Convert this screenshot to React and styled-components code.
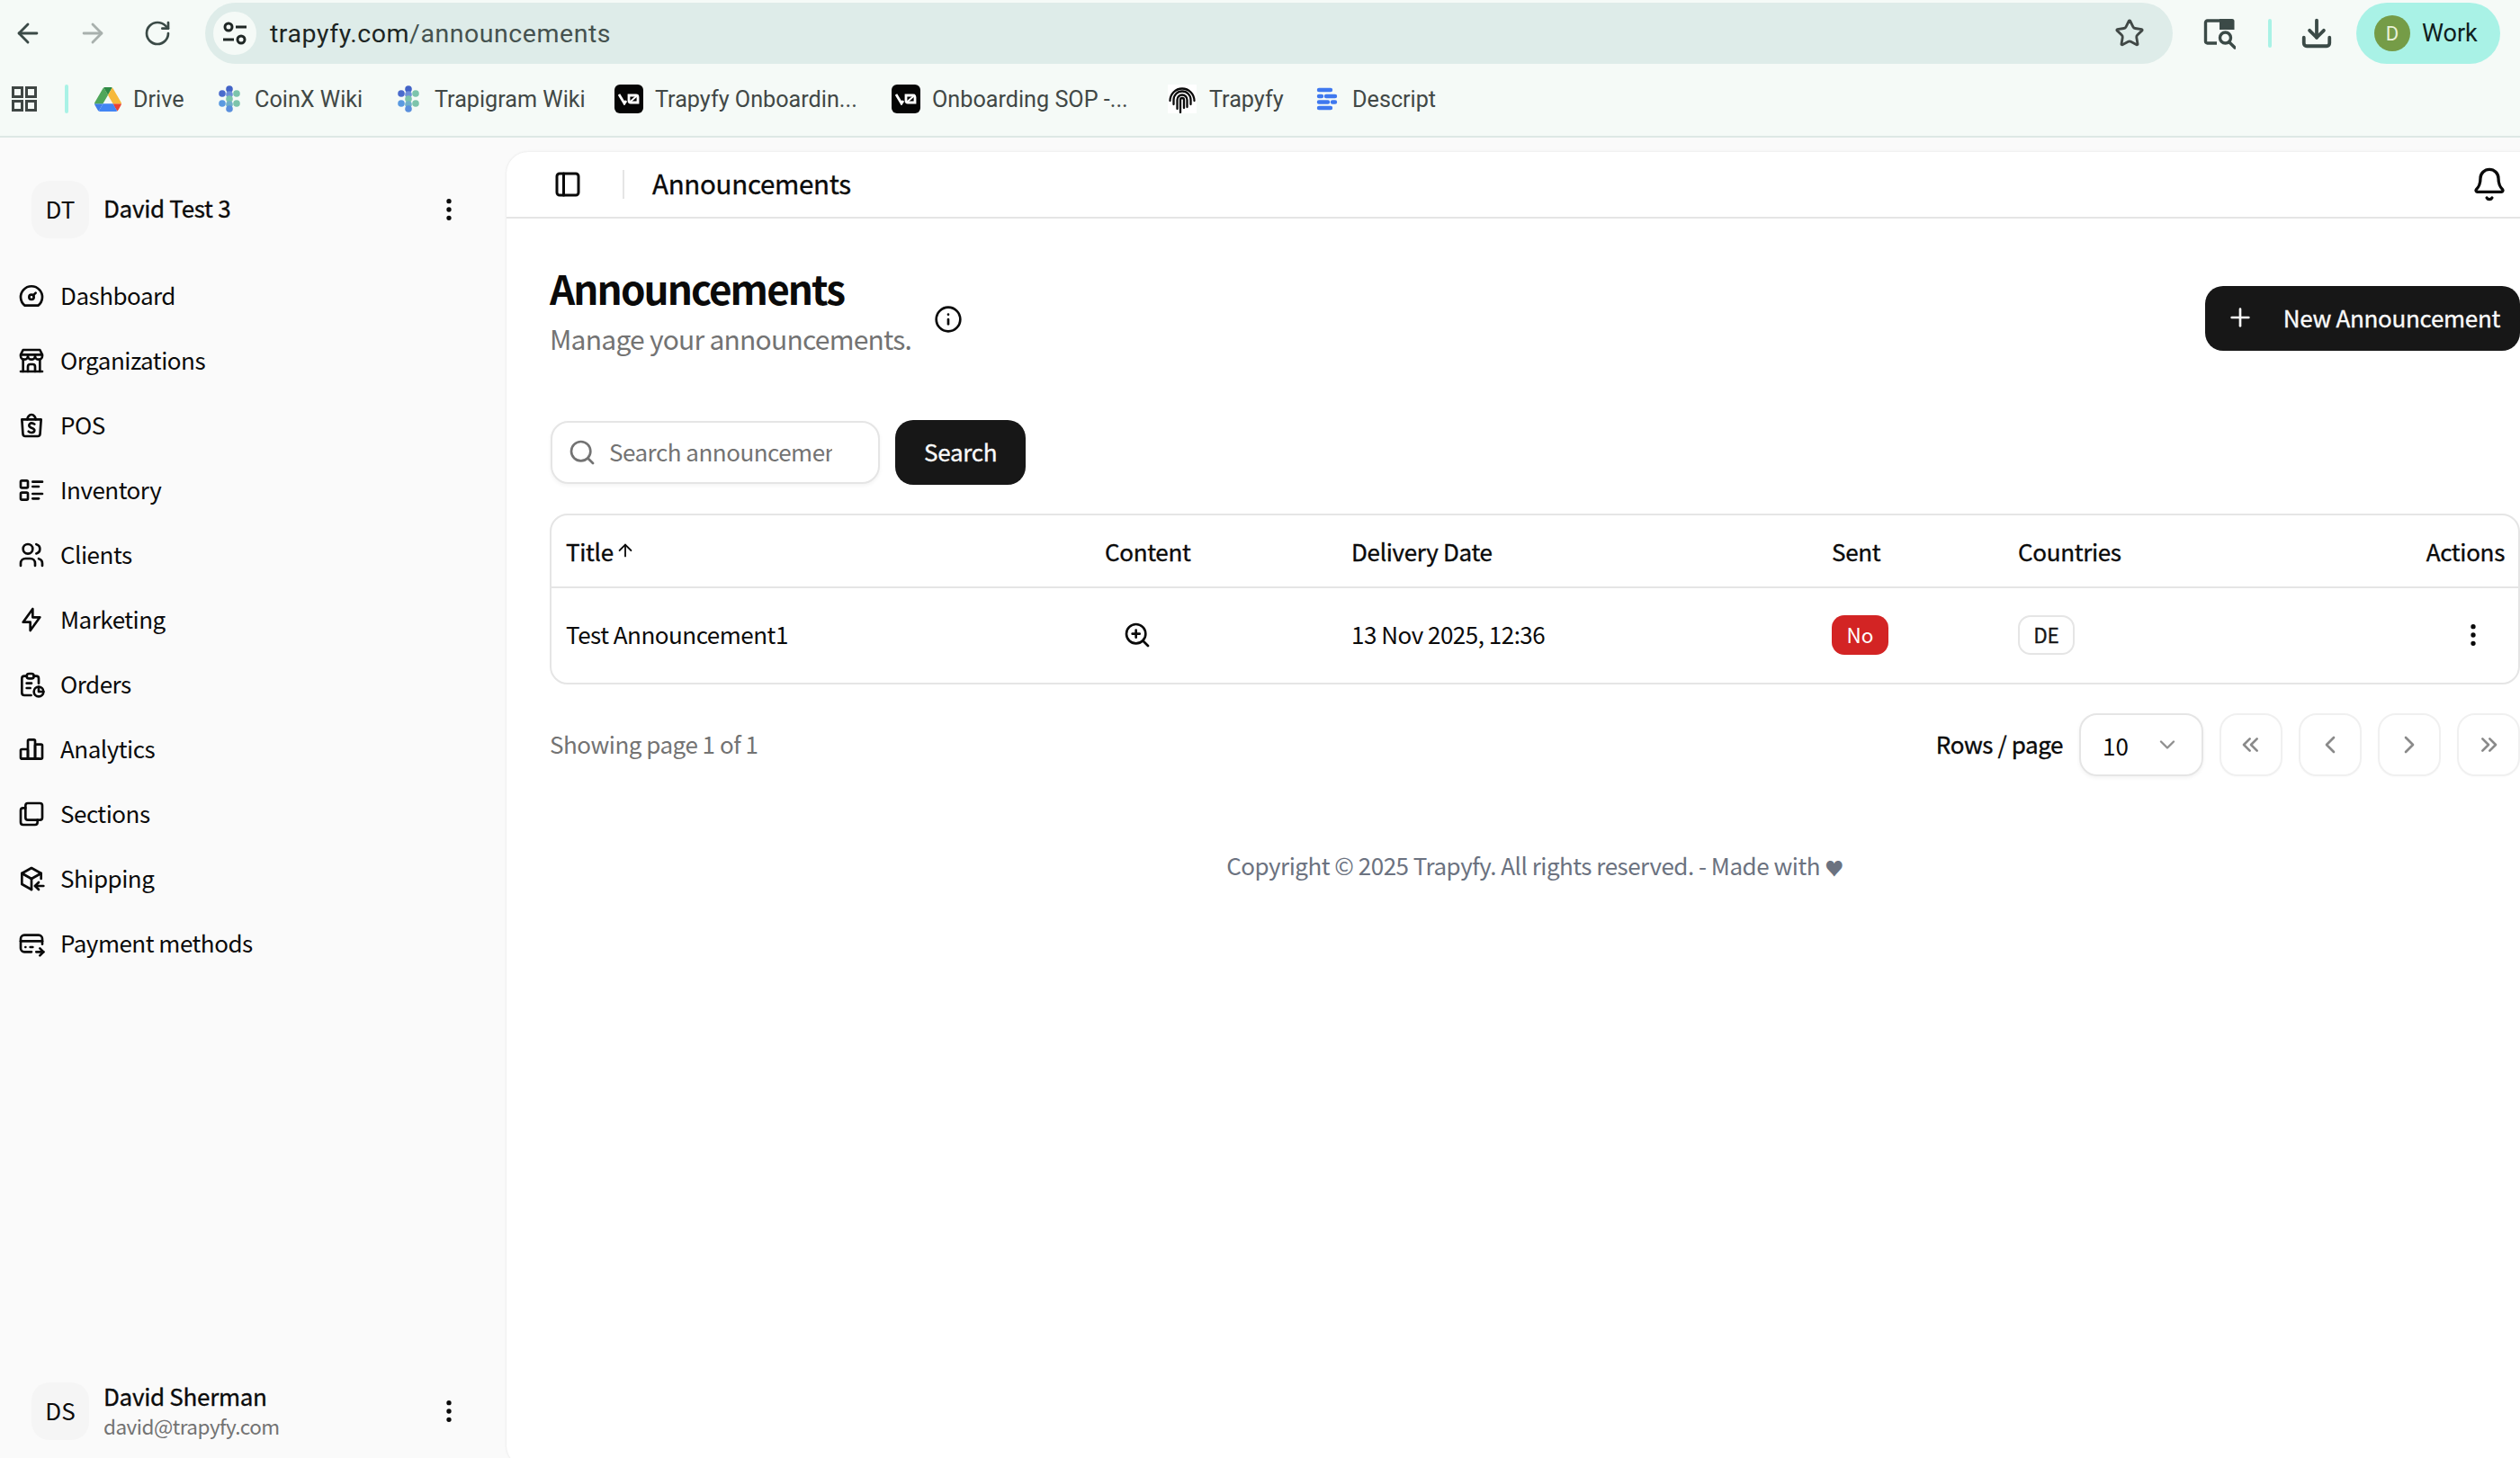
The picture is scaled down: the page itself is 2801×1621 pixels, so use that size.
import React from "react";
import styled, { createGlobalStyle } from "styled-components";
import {
  TbDashboard, TbBuildingStore, TbBrandShopee, TbListDetails, TbUsers, TbBolt, TbReport,
  TbChartBar, TbBoxMultiple, TbPackageImport, TbCreditCardPay, TbDotsVertical, TbLayoutSidebar,
  TbPlus, TbChevronDown, TbChevronsLeft, TbChevronLeft, TbChevronRight, TbChevronsRight,
} from "react-icons/tb";
import { ArrowLeft, ArrowRight, RotateCw, Star, Download, Bell, Info, ArrowUp, Search, ZoomIn } from "lucide-react";

const Global = createGlobalStyle`
  html, body { margin: 0; padding: 0; background: #fafafa; overflow: hidden; }
  * { box-sizing: border-box; }
  #root { width: 2801px; height: 1621px; overflow: hidden; }
`;

const UI = `"Noto Sans CJK JP", "Noto Sans", sans-serif`;
const CHROME = `Roboto, "Noto Sans", sans-serif`;
const MEDIUM = `font-weight: 400; -webkit-text-stroke: 0.35px currentColor;`;

const Page = styled.div`
  width: 2801px; height: 1621px; overflow: hidden; display: flex; flex-direction: column;
  background: #fafafa; font-family: ${UI}; color: #0a0a0a;
`;
const Browser = styled.header`
  flex: none; height: 153px; background: #f5faf7; border-bottom: 2px solid #dde8e5;
  font-family: ${CHROME}; display: flex; flex-direction: column;
`;
const Toolbar = styled.div`
  height: 74px; padding: 3px 0 0 0; display: flex; align-items: flex-start;
`;
const NavIcons = styled.div`
  display: flex; margin-left: -5px;
`;
const NavIcon = styled.span`
  flex: none; width: 72px; height: 68px; display: flex; align-items: center; justify-content: center;
  color: ${p => (p.$off ? "#a8b0ad" : "#3b4a47")};
`;
const Omnibox = styled.div`
  margin-left: 17px; width: 2187px; height: 68px; border-radius: 34px; background: #deece9;
  display: flex; align-items: center; padding: 0 28px 0 9px;
`;
const SiteInfo = styled.span`
  flex: none; width: 48px; height: 48px; border-radius: 50%; background: #f5faf7;
  display: flex; align-items: center; justify-content: center; color: #1f2725;
`;
const Url = styled.div`
  margin-left: 15px; flex: 1; font-size: 28.5px; letter-spacing: 0.55px; color: #1c2523;
  span { color: #45524f; }
`;
const ChromeIcon = styled.span`
  flex: none; display: flex; align-items: center; justify-content: center; height: 68px;
  width: ${p => p.$w || 40}px; margin-left: ${p => p.$ml || 0}px; color: #3b4a47;
`;
const ChromeSep = styled.span`
  flex: none; width: 4px; height: 32px; border-radius: 2px; background: #a9f2e6;
  margin: 18px 0 0 32px;
`;
const Profile = styled.div`
  flex: none; margin-left: 22px; width: 160px; height: 68px; border-radius: 34px; background: #a9f2e6;
  display: flex; align-items: center; padding-left: 20px; font-size: 27px; color: #10201d;
`;
const ProfileDot = styled.span`
  width: 40px; height: 40px; border-radius: 50%; background: #759c47; color: #e8f2d8; font-size: 22px;
  display: flex; align-items: center; justify-content: center; margin-right: 13px;
`;
const Bookmarks = styled.nav`
  height: 76px; display: flex; align-items: center; padding: 0 0 4px 13px;
`;
const BookmarkSep = styled.span`
  flex: none; width: 4px; height: 32px; border-radius: 2px; background: #a9f2e6; margin: 0 29px 0 31px;
`;
const Bookmark = styled.div`
  flex: none; display: flex; align-items: center; color: #414846; font-size: 25.2px;
  width: ${p => p.$w}px; gap: ${p => p.$gap || 14}px; white-space: nowrap;
`;
const LogoTile = styled.span`
  flex: none; width: 32px; height: 32px; border-radius: 6px; background: #050505;
  display: flex; align-items: center; justify-content: center;
`;
const PrintTile = styled.span`
  flex: none; width: 32px; height: 32px; background: #fff; display: flex; align-items: center; justify-content: center;
`;

const Body = styled.div`
  flex: 1; min-height: 0; display: flex;
`;
const Sidebar = styled.aside`
  flex: none; width: 563px; display: flex; flex-direction: column; padding: 48px 0 20px;
`;
const Account = styled.div`
  display: flex; align-items: center; height: 64px; padding: 0 48px 0 35px;
`;
const Avatar = styled.span`
  flex: none; width: 64px; height: 64px; border-radius: 20px; background: #f5f5f5; padding-bottom: 3px;
  display: flex; align-items: center; justify-content: center; font-size: 26px; margin-right: 16px;
`;
const AccountBody = styled.div`
  flex: 1; min-width: 0; margin-bottom: 4px;
`;
const AccountName = styled.div`
  font-size: 26px; ${MEDIUM} line-height: 36px; letter-spacing: -0.3px;
`;
const AccountMail = styled.div`
  font-size: 22.5px; line-height: 30px; color: #737373; letter-spacing: -0.5px;
`;
const Menu = styled.ul`
  list-style: none; margin: 28px 0 0; padding: 0 0 0 19px; flex: 1;
`;
const MenuItem = styled.li`
  height: 72px; display: flex; align-items: center; gap: 16px; font-size: 26px; letter-spacing: -0.5px; color: #0a0a0a;
`;
const MenuLabel = styled.span`
  margin-bottom: 3px;
`;

const Main = styled.main`
  flex: none; width: 2286px; height: 1462px; margin-top: 16px; background: #fff;
  border-radius: 24px; box-shadow: 0 0 3px rgba(0,0,0,.10); display: flex; flex-direction: column;
`;
const TopBar = styled.div`
  flex: none; height: 74px; border-bottom: 2px solid #e5e5e5; display: flex; align-items: center;
  padding: 0 62px 0 50px; color: #0a0a0a;
`;
const TopDivider = styled.span`
  width: 2px; height: 32px; background: #e5e5e5; margin: 0 31px 0 43px;
`;
const TopTitle = styled.div`
  flex: 1; font-size: 29.5px; ${MEDIUM} letter-spacing: -0.3px; margin-bottom: 5px;
`;
const Content = styled.div`
  padding: 48px 48px 0;
`;
const Heading = styled.div`
  display: flex; align-items: center; height: 126px;
`;
const HeadingText = styled.div`
  align-self: flex-start; display: flex; flex-direction: column; gap: 4px; margin-top: -3px;
`;
const H1 = styled.h1`
  margin: 0; font-size: 44px; line-height: 64px; font-weight: 700; letter-spacing: -1.9px;
`;
const Sub = styled.p`
  margin: 0; font-size: 30px; line-height: 40px; color: #737373; letter-spacing: -0.76px;
`;
const InfoWrap = styled.span`
  display: flex; margin-left: 25px; margin-top: 1px;
`;
const PrimaryButton = styled.button`
  border: 0; background: #171717; color: #fafafa; font-family: ${UI}; font-size: 26px; ${MEDIUM}
  letter-spacing: -0.3px; border-radius: 20px; height: 72px; display: flex; align-items: center; justify-content: center;
  gap: 32px; padding: 0 ${p => p.$pr}px 3px ${p => p.$pl}px; flex: none;
`;
const Spacer = styled.div`flex: 1;`;
const SearchRow = styled.div`
  display: flex; gap: 17px; margin-top: 50px; align-items: center; padding-left: 1px;
`;
const SearchBox = styled.div`
  width: 366px; height: 70px; border: 2px solid #e5e5e5; border-radius: 20px; background: #fff;
  box-shadow: 0 2px 4px rgba(0,0,0,.05); display: flex; align-items: center; padding-left: 17px; gap: 14px;
  color: #737373; overflow: hidden; font-size: 26px; letter-spacing: -0.5px; white-space: nowrap;
`;
const Placeholder = styled.span`
  width: 248px; overflow: hidden; margin-bottom: 3px;
`;
const TableWrap = styled.div`
  margin-top: 32px; border: 2px solid #e5e5e5; border-radius: 20px; overflow: hidden;
`;
const Grid = styled.div`
  display: grid; grid-template-columns: 599px 274px 534px 207px 1fr 140px; align-items: center;
  height: ${p => p.$h}px; padding: 0 0 ${p => (p.$head ? 1 : 5)}px 16px; font-size: 26px; letter-spacing: -0.5px;
  ${p => (p.$head ? `${MEDIUM} letter-spacing: -0.32px; border-bottom: 2px solid #e5e5e5;` : "")}
`;
const TitleHead = styled.span`
  display: flex; align-items: center; gap: 2px;
`;
const ActionsHead = styled.span`
  text-align: right; padding-right: 15px;
`;
const ZoomCell = styled.span`
  display: flex; padding: 4px 0 0 20px;
`;
const BadgeCell = styled.span`
  display: flex; padding-top: 3px;
`;
const Badge = styled.span`
  display: inline-flex; align-items: center; justify-content: center; height: 44px; width: 63px; padding-bottom: 2px;
  border-radius: 14px; font-size: 22.5px; font-weight: 400; color: #fff; background: #d32424; letter-spacing: 0;
`;
const CountryBadge = styled(Badge)`
  background: #fff; color: #171717; border: 2px solid #e5e5e5; -webkit-text-stroke: 0.3px currentColor;
`;
const ActionCell = styled.span`
  display: flex; justify-content: flex-end; padding: 4px 34px 0 0;
`;
const Pager = styled.div`
  display: flex; align-items: center; margin-top: 32px; height: 70px;
`;
const PageNote = styled.div`
  flex: 1; font-size: 26px; letter-spacing: -0.5px; color: #737373; margin-bottom: 4px;
`;
const RowsLabel = styled.div`
  font-size: 26px; ${MEDIUM} margin: 0 18px 4px 0; letter-spacing: -0.42px;
`;
const SelectBox = styled.div`
  width: 138px; height: 70px; border: 2px solid #e5e5e5; border-radius: 20px;
  box-shadow: 0 2px 4px rgba(0,0,0,.05); display: flex; align-items: center; justify-content: space-between;
  padding: 0 24px 0 24px; font-size: 26px; margin-right: 18px; color: #0a0a0a;
  svg { opacity: .45; }
`;
const PageButton = styled.span`
  flex: none; width: 70px; height: 70px; border: 2px solid #f0f0f0; border-radius: 20px;
  display: flex; align-items: center; justify-content: center; margin-left: ${p => (p.$first ? 0 : 18)}px;
  color: #8a8a8a; box-shadow: 0 1px 2px rgba(0,0,0,.02);
`;
const Copyright = styled.footer`
  margin-top: 80px; text-align: center; font-size: 26px; line-height: 38px; color: #6b7280; letter-spacing: -0.5px;
`;
const Heart = styled.span`
  font-size: 21px;
`;

const GearTune = () => (
  <svg width="32" height="32" viewBox="0 0 32 32" fill="none" stroke="currentColor" strokeWidth="3">
    <circle cx="9" cy="9" r="4" /><path d="M17 9h12" />
    <circle cx="23" cy="23" r="4" /><path d="M3 23h12" />
  </svg>
);
const Apps = () => (
  <svg width="28" height="28" viewBox="0 0 28 28" fill="none" stroke="#3f4644" strokeWidth="3">
    <rect x="1.5" y="1.5" width="10" height="10" /><rect x="16.5" y="1.5" width="10" height="10" />
    <rect x="1.5" y="16.5" width="10" height="10" /><rect x="16.5" y="16.5" width="10" height="10" />
  </svg>
);
const SideSearch = () => (
  <svg width="36" height="36" viewBox="0 0 36 36" fill="none" stroke="#3b4a47" strokeWidth="3.4">
    <path d="M15 29H4.5a2 2 0 0 1-2-2V6a2 2 0 0 1 2-2H20" />
    <path fill="#3b4a47" stroke="none" d="M18 2h14a2.5 2.5 0 0 1 2.5 2.5V14H18z" />
    <circle cx="24.5" cy="23" r="6" /><path d="M29 28l6 6" strokeLinecap="round" />
  </svg>
);
const Drive = () => (
  <svg width="30" height="27" viewBox="0 0 87.3 78">
    <path d="m6.6 66.85 3.85 6.65c.8 1.4 1.95 2.5 3.3 3.3l13.75-23.8h-27.5c0 1.55.4 3.1 1.2 4.5z" fill="#3f7de8" />
    <path d="m43.65 25-13.75-23.8c-1.35.8-2.5 1.9-3.3 3.3l-25.4 44a9.06 9.06 0 0 0 -1.2 4.5h27.5z" fill="#4fa65a" />
    <path d="m73.55 76.8c1.35-.8 2.5-1.9 3.3-3.3l1.6-2.75 7.65-13.25c.8-1.4 1.2-2.95 1.2-4.5h-27.502l5.852 11.5z" fill="#ea4335" />
    <path d="m43.65 25 13.75-23.8c-1.35-.8-2.9-1.2-4.5-1.2h-18.5c-1.6 0-3.15.45-4.5 1.2z" fill="#2f8a45" />
    <path d="m59.8 53h-32.3l-13.75 23.8c1.35.8 2.9 1.2 4.5 1.2h50.8c1.6 0 3.15-.45 4.5-1.2z" fill="#4285f4" />
    <path d="m73.4 26.5-12.7-22c-.8-1.4-1.95-2.5-3.3-3.3l-13.75 23.8 16.15 28h27.45c0-1.55-.4-3.1-1.2-4.5z" fill="#f6b93b" />
  </svg>
);
const Hex = () => {
  const dots = [[13,4,"#4263c7"],[5,9,"#4a6bcc"],[13,10,"#6d8fd8"],[21,9,"#7cc4ab"],[13,15,"#7cc4ab"],[5,20,"#5a9ae0"],[21,20,"#7cc4ab"],[13,21,"#6fb0c8"],[13,26,"#5a8fdc"]];
  return (
    <svg width="26" height="30" viewBox="0 0 26 30">
      {dots.map(([x, y, c], i) => <circle key={i} cx={x} cy={y} r="3.8" fill={c} />)}
    </svg>
  );
};
const VZero = () => (
  <svg width="24" height="14" viewBox="0 0 24 14" fill="none" stroke="#fff" strokeWidth="2.8">
    <path d="M1 2l6 10 2-3" />
    <path d="M12 3h8a2 2 0 0 1 2 2v6h-8a2 2 0 0 1-2-2z" />
    <path d="M12.5 11L21.5 3" strokeWidth="2" />
  </svg>
);
const Print = () => (
  <svg width="32" height="32" viewBox="0 0 32 32" fill="none" stroke="#0a0a0a" strokeWidth="2.3" strokeLinecap="round">
    <path d="M2.5 18a13.5 13.5 0 0 1 27 0" />
    <path d="M6.5 22v-5a9.5 9.5 0 0 1 19 0v5" />
    <path d="M10.5 27v-10a5.5 5.5 0 0 1 11 0v8" />
    <path d="M14 31V17a2 2 0 0 1 4 0v9" />
  </svg>
);
const Descript = () => (
  <svg width="24" height="26" viewBox="0 0 24 26" stroke="#3f78ef" strokeWidth="4.4" fill="none" strokeLinecap="round">
    <path d="M3 3h13" /><path d="M3 10h3M11 10h10" /><path d="M3 16.5h10M18 16.5h3" /><path d="M3 23h13" />
  </svg>
);

const menu = [
  [TbDashboard, "Dashboard"], [TbBuildingStore, "Organizations"], [TbBrandShopee, "POS"],
  [TbListDetails, "Inventory"], [TbUsers, "Clients"], [TbBolt, "Marketing"], [TbReport, "Orders"],
  [TbChartBar, "Analytics"], [TbBoxMultiple, "Sections"], [TbPackageImport, "Shipping"],
  [TbCreditCardPay, "Payment methods"],
];

export default function App() {
  return (
    <Page>
      <Global />
      <Browser>
        <Toolbar>
          <NavIcons>
            <NavIcon><ArrowLeft size={34} strokeWidth={2} /></NavIcon>
            <NavIcon $off><ArrowRight size={34} strokeWidth={2} /></NavIcon>
            <NavIcon><RotateCw size={32} strokeWidth={2} /></NavIcon>
          </NavIcons>
          <Omnibox>
            <SiteInfo><GearTune /></SiteInfo>
            <Url>trapyfy.com<span>/announcements</span></Url>
            <ChromeIcon><Star size={34} strokeWidth={2} color="#414846" /></ChromeIcon>
          </Omnibox>
          <ChromeIcon $w={44} $ml={30}><SideSearch /></ChromeIcon>
          <ChromeSep />
          <ChromeIcon $w={44} $ml={28}><Download size={38} strokeWidth={2.4} /></ChromeIcon>
          <Profile><ProfileDot>D</ProfileDot>Work</Profile>
        </Toolbar>
        <Bookmarks>
          <Apps />
          <BookmarkSep />
          <Bookmark $w={137} $gap={13}><Drive />Drive</Bookmark>
          <Bookmark $w={199} $gap={15}><Hex />CoinX Wiki</Bookmark>
          <Bookmark $w={242} $gap={16}><Hex />Trapigram Wiki</Bookmark>
          <Bookmark $w={308} $gap={13}><LogoTile><VZero /></LogoTile>Trapyfy Onboardin...</Bookmark>
          <Bookmark $w={307} $gap={13}><LogoTile><VZero /></LogoTile>Onboarding SOP -...</Bookmark>
          <Bookmark $w={165} $gap={14}><PrintTile><Print /></PrintTile>Trapyfy</Bookmark>
          <Bookmark $w={140} $gap={16}><Descript />Descript</Bookmark>
        </Bookmarks>
      </Browser>
      <Body>
        <Sidebar>
          <Account>
            <Avatar>DT</Avatar>
            <AccountBody><AccountName>David Test 3</AccountName></AccountBody>
            <TbDotsVertical size={32} />
          </Account>
          <Menu>
            {menu.map(([Icon, label]) => (
              <MenuItem key={label}><Icon size={32} /><MenuLabel>{label}</MenuLabel></MenuItem>
            ))}
          </Menu>
          <Account>
            <Avatar>DS</Avatar>
            <AccountBody>
              <AccountName>David Sherman</AccountName>
              <AccountMail>david@trapyfy.com</AccountMail>
            </AccountBody>
            <TbDotsVertical size={32} />
          </Account>
        </Sidebar>
        <Main>
          <TopBar>
            <TbLayoutSidebar size={36} />
            <TopDivider />
            <TopTitle>Announcements</TopTitle>
            <Bell size={40} strokeWidth={2} />
          </TopBar>
          <Content>
            <Heading>
              <HeadingText>
                <H1>Announcements</H1>
                <Sub>Manage your announcements.</Sub>
              </HeadingText>
              <InfoWrap><Info size={32} /></InfoWrap>
              <Spacer />
              <PrimaryButton $pl={23} $pr={22}><TbPlus size={32} />New Announcement</PrimaryButton>
            </Heading>
            <SearchRow>
              <SearchBox>
                <Search size={32} />
                <Placeholder>Search announcements</Placeholder>
              </SearchBox>
              <PrimaryButton $pl={32} $pr={32}>Search</PrimaryButton>
            </SearchRow>
            <TableWrap>
              <Grid $head $h={81}>
                <TitleHead>Title <ArrowUp size={22} /></TitleHead>
                <span>Content</span>
                <span>Delivery Date</span>
                <span>Sent</span>
                <span>Countries</span>
                <ActionsHead>Actions</ActionsHead>
              </Grid>
              <Grid $h={105}>
                <span>Test Announcement1</span>
                <ZoomCell><ZoomIn size={32} /></ZoomCell>
                <span>13 Nov 2025, 12:36</span>
                <BadgeCell><Badge>No</Badge></BadgeCell>
                <BadgeCell><CountryBadge>DE</CountryBadge></BadgeCell>
                <ActionCell><TbDotsVertical size={32} /></ActionCell>
              </Grid>
            </TableWrap>
            <Pager>
              <PageNote>Showing page 1 of 1</PageNote>
              <RowsLabel>Rows / page</RowsLabel>
              <SelectBox>10 <TbChevronDown size={28} /></SelectBox>
              <PageButton $first><TbChevronsLeft size={32} /></PageButton>
              <PageButton><TbChevronLeft size={32} /></PageButton>
              <PageButton><TbChevronRight size={32} /></PageButton>
              <PageButton><TbChevronsRight size={32} /></PageButton>
            </Pager>
            <Copyright>Copyright © 2025 Trapyfy. All rights reserved. - Made with <Heart>♥</Heart></Copyright>
          </Content>
        </Main>
      </Body>
    </Page>
  );
}
